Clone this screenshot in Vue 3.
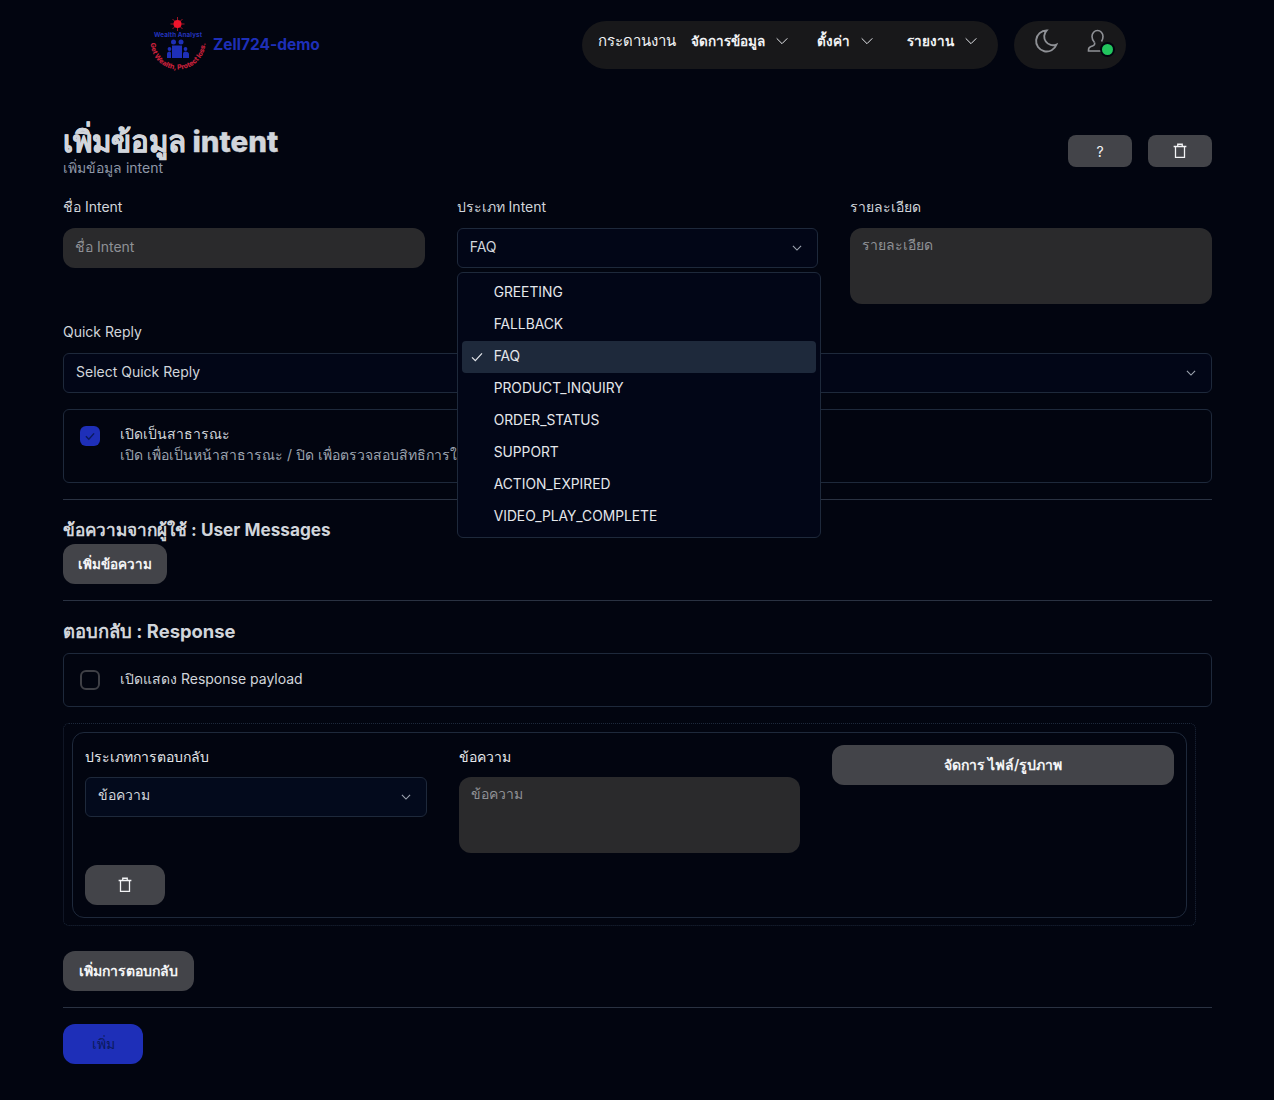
<template>
  <div class="page">
    <header class="topbar">
      <div class="brand">
        <svg class="logo" viewBox="0 0 56 56" width="56" height="56">
          <defs>
            <path id="logoArc" d="M0.500 26 A27.500 27.500 0 0 0 55.500 26" />
          </defs>
          <g stroke="#e11d2e" stroke-width="0.700">
            <path d="M27.500 1v14M20.500 8h14M22.500 3l10 10M32.500 3l-10 10" />
          </g>
          <circle cx="27.500" cy="8" r="4" fill="#f0142c" />
          <text x="28" y="21" class="logo-top" textLength="48">Wealth Analyst</text>
          <g fill="#1e2fb8">
            <circle cx="23.500" cy="26" r="2.500" />
            <circle cx="31" cy="26" r="2.500" />
            <path d="M22 29.500h10v12.500H22z" />
            <circle cx="19.500" cy="33" r="1.900" />
            <circle cx="35.500" cy="33" r="1.900" />
            <path d="M17 42v-4c0-1.500 1-2.500 2.500-2.500S21 36.500 21 38v4zM33 42v-4c0-1.500 1-2.500 2.500-2.500S39 36.500 39 38v4z" />
          </g>
          <text class="logo-arc"><textPath href="#logoArc" startOffset="50%" text-anchor="middle" textLength="84">Get Wealth, Protect loss.</textPath></text>
        </svg>
        <span class="brand-name">Zell724-demo</span>
      </div>

      <nav class="menu">
        <a class="menu-link plain">กระดานงาน</a>
        <a v-for="item in menuItems" :key="item.label" class="menu-link" :style="{ width: item.width + 'px' }">
          {{ item.label }}
          <svg class="chev" viewBox="0 0 24 24" width="16" height="16"><path d="M4 8l8 8 8-8" /></svg>
        </a>
      </nav>

      <div class="tools">
        <svg class="tool moon" viewBox="0 0 24 24" width="28" height="28">
          <path d="M12.500 3a9 9 0 1 0 8.500 12 7.500 7.500 0 0 1-8.500-12z" />
        </svg>
        <div class="avatar">
          <svg class="tool" viewBox="0 0 24 24" width="24" height="24">
            <path d="M8.500 13.500C6.800 11.800 6 9.800 6 7.500 6 4 8.500 1.500 11.500 1.500S17 4 17 7.500c0 2-.5 3.500-1.500 5" />
            <path d="M8.500 13.500c.5 1.500 0 3-2 3.500l-1.500.5C3.500 18 2.500 19.500 2.500 21v1h13" />
          </svg>
          <span class="online"></span>
        </div>
      </div>
    </header>

    <main class="content">
      <div class="title-row">
        <div>
          <h1>เพิ่มข้อมูล intent</h1>
          <p class="subtitle">เพิ่มข้อมูล intent</p>
        </div>
        <div class="title-actions">
          <button class="btn small">?</button>
          <button class="btn small">
            <svg class="trash" viewBox="0 0 24 24" width="18" height="18"><path d="M3.500 6h17M6 6v14.500h12V6M9 6V3h6v3" /></svg>
          </button>
        </div>
      </div>

      <div class="three-col">
        <div class="field">
          <label>ชื่อ Intent</label>
          <input class="input" placeholder="ชื่อ Intent" />
        </div>
        <div class="field select-wrap">
          <label>ประเภท Intent</label>
          <div class="select">
            <span>FAQ</span>
            <svg class="chev grey" viewBox="0 0 24 24" width="14" height="14"><path d="M5 8.500l7 7 7-7" /></svg>
          </div>
          <ul class="dropdown">
            <li v-for="opt in intentTypes" :key="opt" :class="{ active: opt === selected }">
              <svg v-if="opt === selected" class="tick" viewBox="0 0 24 24" width="16" height="16"><path d="M4.500 12.500l5 5 10-11" /></svg>
              {{ opt }}
            </li>
          </ul>
        </div>
        <div class="field">
          <label>รายละเอียด</label>
          <textarea class="input area" placeholder="รายละเอียด"></textarea>
        </div>
      </div>

      <div class="field quick">
        <label>Quick Reply</label>
        <div class="select">
          <span>Select Quick Reply</span>
          <svg class="chev grey" viewBox="0 0 24 24" width="14" height="14"><path d="M5 8.500l7 7 7-7" /></svg>
        </div>
      </div>

      <div class="card public">
        <span class="check on">
          <svg viewBox="0 0 24 24" width="14" height="14"><path d="M5 12.500l5 5 9-10" /></svg>
        </span>
        <div>
          <div class="card-title">เปิดเป็นสาธารณะ</div>
          <div class="card-desc">เปิด เพื่อเป็นหน้าสาธารณะ / ปิด เพื่อตรวจสอบสิทธิการใช้งาน</div>
        </div>
      </div>

      <hr class="rule" />

      <h2 class="user-title">ข้อความจากผู้ใช้ : User Messages</h2>
      <button class="btn add-msg">เพิ่มข้อความ</button>

      <hr class="rule" />

      <h2>ตอบกลับ : Response</h2>
      <div class="card payload">
        <span class="check"></span>
        <div class="card-title">เปิดแสดง Response payload</div>
      </div>

      <div class="outer-box">
        <div class="inner-box">
          <div class="three-col reply-grid">
            <div class="field reply-field">
              <label class="bright">ประเภทการตอบกลับ</label>
              <div class="select tinted">
                <span>ข้อความ</span>
                <svg class="chev grey" viewBox="0 0 24 24" width="14" height="14"><path d="M5 8.500l7 7 7-7" /></svg>
              </div>
            </div>
            <div class="field reply-field">
              <label class="bright">ข้อความ</label>
              <textarea class="input area" placeholder="ข้อความ"></textarea>
            </div>
            <button class="btn files">จัดการ ไฟล์/รูปภาพ</button>
          </div>
          <button class="btn del">
            <svg class="trash" viewBox="0 0 24 24" width="18" height="18"><path d="M3.500 6h17M6 6v14.500h12V6M9 6V3h6v3" /></svg>
          </button>
        </div>
      </div>

      <button class="btn add-reply">เพิ่มการตอบกลับ</button>

      <hr class="rule" />

      <button class="btn submit">เพิ่ม</button>
    </main>
  </div>
</template>

<script setup>
import { ref } from "vue";

const selected = ref("FAQ");

const menuItems = [
  { label: "จัดการข้อมูล", width: 126 },
  { label: "ตั้งค่า", width: 90 },
  { label: "รายงาน", width: 90 },
];

const intentTypes = [
  "GREETING",
  "FALLBACK",
  "FAQ",
  "PRODUCT_INQUIRY",
  "ORDER_STATUS",
  "SUPPORT",
  "ACTION_EXPIRED",
  "VIDEO_PLAY_COMPLETE",
];
</script>

<style>
body {
  background: #020510;
}
</style>

<style scoped>
.page {
  height: 1100px;
  overflow: hidden;
  background: #020510;
  color: #d1d5db;
  font-family: "Inter", "Noto Sans", "DejaVu Sans", sans-serif;
  font-size: 14px;
}

.topbar {
  display: flex;
  align-items: flex-start;
  height: 90px;
  padding: 21px 148px 0 150px;
  box-sizing: border-box;
}

.brand {
  display: flex;
  align-items: center;
  gap: 7px;
  margin-top: -5px;
  width: 432px;
}

.logo {
  flex: none;
  overflow: visible;
}

.logo-top {
  font-size: 6.300px;
  font-weight: 700;
  fill: #2233bb;
  text-anchor: middle;
}

.logo-arc {
  font-size: 7px;
  font-weight: 800;
  fill: #c5203a;
}

.brand-name {
  color: #1e2fb8;
  font-size: 15.500px;
  font-weight: 700;
}

.menu {
  display: flex;
  align-items: center;
  width: 416px;
  height: 48px;
  padding-left: 16px;
  box-sizing: border-box;
  border-radius: 24px;
  background: #18181a;
  margin-right: 16px;
  flex: none;
}

.menu-link {
  display: flex;
  align-items: center;
  gap: 9px;
  flex: none;
  color: #f1f2f4;
  font-size: 13.500px;
  font-weight: 600;
  margin-top: -8px;
  white-space: nowrap;
}

.menu-link.plain {
  width: 93px;
  font-size: 15px;
  font-weight: 400;
}

.chev {
  fill: none;
  stroke: #e5e7eb;
  stroke-width: 1.500;
}

.chev.grey {
  stroke: #9ca3af;
  stroke-width: 2;
}

.tools {
  display: flex;
  align-items: center;
  gap: 26px;
  width: 112px;
  height: 48px;
  padding: 0 0 9px 18px;
  box-sizing: border-box;
  border-radius: 24px;
  background: #18181a;
  flex: none;
}

.tool {
  fill: none;
  stroke: #8f9196;
  stroke-width: 1.600;
  display: block;
}

.avatar {
  position: relative;
}

.online {
  position: absolute;
  right: -2.500px;
  bottom: -2px;
  width: 11px;
  height: 11px;
  border-radius: 50%;
  background: #22c55e;
  box-shadow: 0 0 0 2px #020510;
}

.content {
  padding: 32px 62px 0 63px;
}

.title-row {
  display: flex;
  justify-content: space-between;
  align-items: flex-start;
  height: 75px;
}

h1 {
  margin: 0;
  padding-top: 1px;
  color: #d1d5db;
  font-size: 29.500px;
  font-weight: 800;
  line-height: 36px;
  -webkit-text-stroke: 0.400px #d1d5db;
}

.subtitle {
  margin: 0;
  color: #8f98a8;
  font-size: 14px;
  line-height: 17px;
}

.title-actions {
  display: flex;
  gap: 16px;
  margin-top: 13px;
}

.btn {
  display: flex;
  align-items: center;
  justify-content: center;
  border: 0;
  border-radius: 12px;
  background: #434449;
  color: #f3f4f6;
  font-family: inherit;
  font-size: 14px;
  font-weight: 600;
  height: 40px;
  padding: 0 16px;
}

.btn.small {
  width: 64px;
  height: 32px;
  border-radius: 8px;
  padding: 0;
  font-weight: 400;
}

.trash {
  fill: none;
  stroke: #f3f4f6;
  stroke-width: 1.700;
}

.three-col {
  display: grid;
  grid-template-columns: repeat(3, 1fr);
  gap: 32px;
}

.field {
  display: flex;
  flex-direction: column;
  gap: 12px;
  min-width: 0;
}

.reply-field {
  gap: 11px;
  padding-top: 2px;
}

label {
  color: #d1d5db;
  font-size: 14px;
  line-height: 19px;
}

label.bright {
  color: #e5e7eb;
}

.input {
  display: block;
  width: 100%;
  height: 40px;
  box-sizing: border-box;
  padding: 0 12px 3px;
  border: 0;
  border-radius: 12px;
  background: #2a2a2c;
  color: #d1d5db;
  font-family: inherit;
  font-size: 14px;
  outline: none;
  resize: none;
}

.input::placeholder {
  color: #8f9196;
}

.area {
  height: 76px;
  padding-top: 6px;
}

.select {
  display: flex;
  align-items: center;
  justify-content: space-between;
  height: 40px;
  box-sizing: border-box;
  padding: 0 13px 0 12px;
  border: 1px solid #1e293b;
  border-radius: 6px;
  background: #020617;
  color: #d1d5db;
}

.select span {
  margin-top: -4px;
}

.select.tinted {
  background: #030a1c;
}

.select-wrap {
  position: relative;
}

.dropdown {
  position: absolute;
  z-index: 5;
  top: 75px;
  left: 0;
  width: 364px;
  margin: 0;
  padding: 4px;
  box-sizing: border-box;
  list-style: none;
  border: 1px solid #1e293b;
  border-radius: 6px;
  background: #020617;
  font-size: 13.800px;
}

.dropdown li {
  display: flex;
  align-items: center;
  height: 32px;
  box-sizing: border-box;
  padding: 0 0 3px 32px;
  position: relative;
  border-radius: 4px;
  color: #e5e7eb;
}

.dropdown li.active {
  background: #1e293b;
}

.tick {
  position: absolute;
  left: 7px;
  top: 8px;
  fill: none;
  stroke: #e5e7eb;
  stroke-width: 1.800;
}

.quick {
  margin-top: 18px;
}

.card {
  display: flex;
  border: 1px solid #1e293b;
  border-radius: 6px;
  box-sizing: border-box;
}

.public {
  height: 74px;
  margin-top: 16px;
  padding: 13px 16px;
  gap: 20px;
}

.public .check {
  margin-top: 3px;
}

.payload {
  height: 54px;
  margin-top: 10px;
  padding: 0 16px;
  gap: 20px;
  align-items: center;
}

.payload .card-title {
  margin-top: -4px;
}

.check {
  flex: none;
  display: flex;
  align-items: center;
  justify-content: center;
  width: 20px;
  height: 20px;
  box-sizing: border-box;
  border: 2px solid #3f4046;
  border-radius: 6px;
}

.check.on {
  border: 0;
  background: #1e2fb8;
}

.check svg {
  fill: none;
  stroke: #0b1a5c;
  stroke-width: 2.500;
}

.card-title {
  color: #d1d5db;
  line-height: 21px;
}

.card-desc {
  color: #9ca3af;
  line-height: 21px;
}

.rule {
  margin: 16px 0 0;
  border: 0;
  border-top: 1px solid #2a3242;
}

h2 {
  margin: 18px 0 0;
  color: #d1d5db;
  font-size: 18.400px;
  font-weight: 700;
  line-height: 24px;
}

h2.user-title {
  font-size: 17.200px;
}

.add-msg {
  width: 104px;
  margin-top: 2px;
  padding: 0;
  font-size: 13.500px;
}

.outer-box {
  width: 1133px;
  height: 203px;
  margin-top: 16px;
  padding: 8px;
  box-sizing: border-box;
  border: 1px dotted #1e293b;
  border-radius: 6px;
}

.inner-box {
  box-sizing: border-box;
  width: 1115px;
  height: 186px;
  padding: 12px;
  border: 1px solid #1e293b;
  border-radius: 12px;
}

.reply-grid {
  grid-template-columns: 342px 341px 342px;
  height: 120px;
}

.del {
  width: 80px;
}

.add-reply {
  margin-top: 25px;
}

.submit {
  width: 80px;
  margin-top: 16px;
  background: #1e2fb8;
  color: #0b1a5c;
  font-weight: 400;
}
</style>
